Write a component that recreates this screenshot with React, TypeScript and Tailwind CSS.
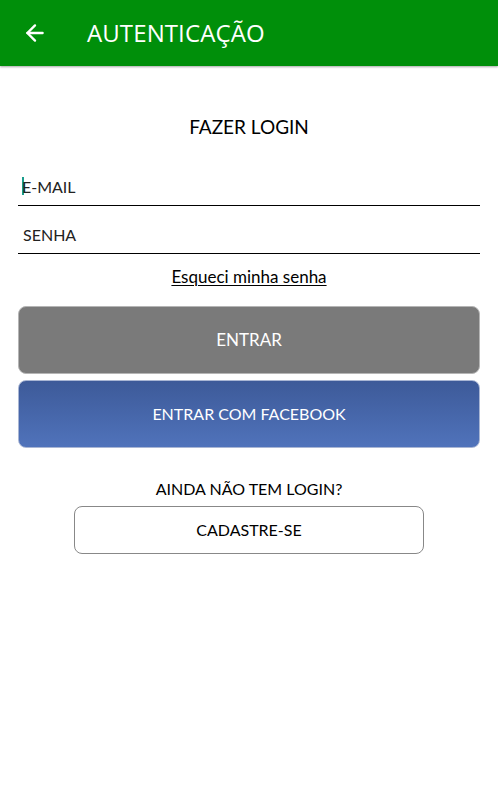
import { ArrowLeft } from 'lucide-react';

export default function App() {
  return (
    <div className="min-h-screen bg-white" style={{ fontFamily: '"Lato", "Noto Sans", sans-serif' }}>
      {/* Header */}
      <header className="h-[66px] bg-[#008f0a] flex items-center shadow-[0_1px_2px_rgba(0,0,0,0.35)]">
        <button className="ml-[22px] text-white">
          <ArrowLeft size={26} strokeWidth={2.2} />
        </button>
        <h1 className="ml-[39px] text-white text-[24px] tracking-[0.1px]" style={{ fontFamily: '"Open Sans", sans-serif' }}>
          AUTENTICAÇÃO
        </h1>
      </header>

      <main className="px-[18px] pt-[51px] flex flex-col">
        <h2 className="text-center text-[19px] text-black leading-none">FAZER LOGIN</h2>

        <div className="mt-[29px] border-b-[1.5px] border-black h-[41px] flex items-end pb-[10px] pl-[4px]">
          <span className="w-[2px] h-[18px] bg-[#1a9c8c] mr-[-2px]" />
          <span className="text-[16px] text-[#222] leading-none">E-MAIL</span>
        </div>
        <div className="border-b-[1.5px] border-black h-[48px] flex items-end pb-[10px] pl-[5px]">
          <span className="text-[16px] text-[#222] leading-none">SENHA</span>
        </div>

        <a className="mt-[14px] self-center text-[17px] text-black underline underline-offset-2 leading-none">
          Esqueci minha senha
        </a>

        <button className="mt-[21px] h-[68px] rounded-[8px] bg-[#7a7a7a] border border-[#b5b5b5] text-white text-[17px]">
          ENTRAR
        </button>
        <button className="mt-[6px] h-[68px] rounded-[8px] bg-gradient-to-b from-[#3d5a99] to-[#5073bb] border border-[#a9b6d4] text-white text-[16px]">
          ENTRAR COM FACEBOOK
        </button>

        <p className="mt-[33px] text-center text-[16px] text-black leading-none">AINDA NÃO TEM LOGIN?</p>
        <button className="mt-[9px] mx-[56px] h-[48px] rounded-[8px] border border-[#888] bg-white text-[16px] text-black">
          CADASTRE-SE
        </button>
      </main>
    </div>
  );
}
